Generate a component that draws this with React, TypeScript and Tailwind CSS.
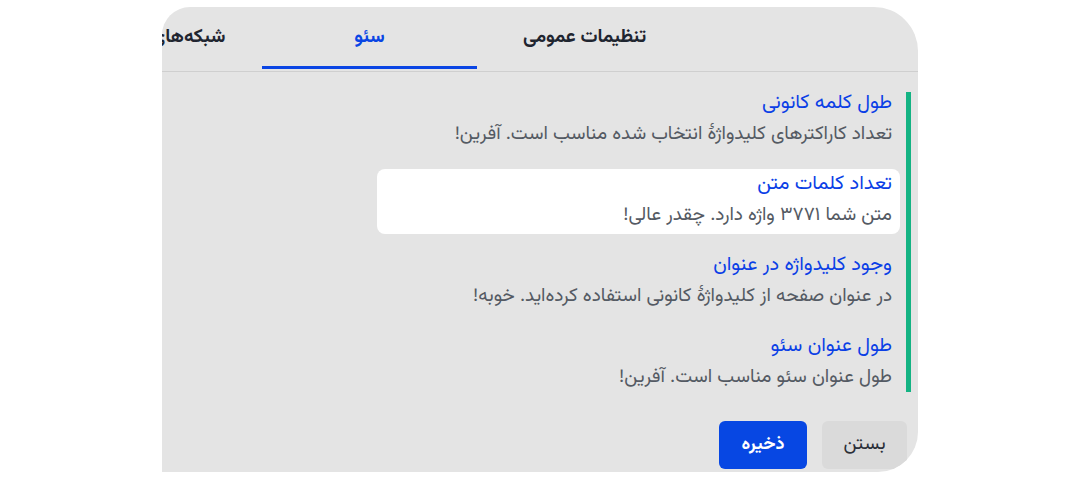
import { useState } from 'react';

const FONT = { fontFamily: '"Vazirmatn", "Noto Sans Arabic", "Noto Naskh Arabic", "DejaVu Sans", sans-serif' };

const TABS = ['تنظیمات عمومی', 'سئو', 'شبکه‌های اجتماعی'];

const CHECKS = [
  { title: 'طول کلمه کانونی', text: 'تعداد کاراکترهای کلیدواژهٔ انتخاب شده مناسب است. آفرین!' },
  { title: 'تعداد کلمات متن', text: 'متن شما ۳۷۷۱ واژه دارد. چقدر عالی!' },
  { title: 'وجود کلیدواژه در عنوان', text: 'در عنوان صفحه از کلیدواژهٔ کانونی استفاده کرده‌اید. خوبه!' },
  { title: 'طول عنوان سئو', text: 'طول عنوان سئو مناسب است. آفرین!' },
];

export default function App() {
  const [tab, setTab] = useState(1);
  const [hovered] = useState(1);

  return (
    <div className="w-[1080px] h-[480px] bg-white overflow-hidden" style={FONT}>
      <div
        dir="rtl"
        className="ml-[162px] mt-[7px] w-[756px] h-[465px] bg-[#e4e4e4] rounded-tl-[28px] rounded-tr-[44px] rounded-br-[40px] overflow-hidden flex flex-col"
      >
        <div className="h-[65px] shrink-0 border-b border-[#cfcfcf] flex pr-[226px]">
          {TABS.map((t, i) => (
            <button
              key={t}
              onClick={() => setTab(i)}
              className="w-[215px] shrink-0 flex flex-col"
            >
              <span
                className={`flex-1 flex items-center justify-center pt-[3px] text-[19px] font-bold whitespace-nowrap ${
                  tab === i ? 'text-[#0a45e4]' : 'text-[#1f2530]'
                }`}
              >
                {t}
              </span>
              <span className={`h-[3px] mb-[2px] ${tab === i ? 'bg-[#0a45e4]' : 'bg-transparent'}`} />
            </button>
          ))}
        </div>

        <div className="mt-[16px] mr-[7px] flex self-start">
          <div className="w-[5px] my-[4px] bg-[#14b383]" />
          <div className="mr-[6px] w-[523px] flex flex-col gap-[16px]">
            {CHECKS.map((c, i) => (
              <div
                key={c.title}
                className={`px-[8px] pt-[3px] pb-[4px] rounded-[8px] ${hovered === i ? 'bg-white' : ''}`}
              >
                <div className="text-[20px] leading-[24px] text-[#0b3fe6] whitespace-nowrap">{c.title}</div>
                <div className="mt-[6px] text-[19px] leading-[28px] text-[#545a63] whitespace-nowrap">{c.text}</div>
              </div>
            ))}
          </div>
        </div>

        <div className="mt-auto mb-[3px] pr-[11px] flex gap-[15px]">
          <button className="w-[85px] h-[48px] rounded-[6px] bg-[#dadada] text-[19px] text-[#2a2f38]">
            بستن
          </button>
          <button className="w-[88px] h-[48px] rounded-[6px] bg-[#0747e3] text-[18px] font-bold text-white">
            ذخیره
          </button>
        </div>
      </div>
    </div>
  );
}
